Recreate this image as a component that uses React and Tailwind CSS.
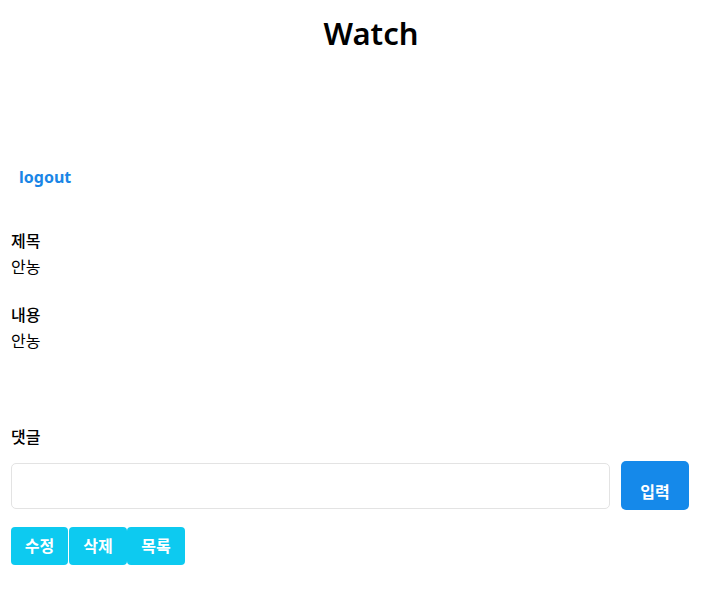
export default function App() {
    const font = { fontFamily: '"Noto Sans", "Noto Sans CJK KR", sans-serif' };
    return (
        <div className="w-[714px] h-[589px] bg-white text-black font-['Noto_Sans','Noto_Sans_CJK_KR',sans-serif]" style={font}>
            <h1 className="pt-[12px] pl-[28px] text-center text-[31px] leading-[42px] font-semibold">Watch</h1>

            <div className="mt-[111px] pl-[19px]">
                <a className="text-[16px] leading-[22px] font-bold text-[#1a86e6]">logout</a>
            </div>

            <div className="px-[11px] mt-[39px]">
                <div className="text-[16px] leading-[26px] font-medium">제목</div>
                <div className="text-[16px] leading-[26px]">안농</div>

                <div className="mt-[22px] text-[16px] leading-[26px] font-medium">내용</div>
                <div className="text-[16px] leading-[26px]">안농</div>

                <div className="mt-[70px] text-[16px] leading-[26px] font-medium">댓글</div>

                <div className="mt-[11px] flex items-center gap-[11px] pr-[14px]">
                    <input
                        type="text"
                        className="flex-1 h-[46px] border border-[#e3e3e3] rounded-[5px] px-3 outline-none"
                    />
                    <button className="w-[68px] h-[49px] pt-[12px] bg-[#1589ea] text-white text-[16px] font-semibold rounded-[5px]">
                        입력
                    </button>
                </div>

                <div className="mt-[17px] flex">
                    <button className="w-[57px] h-[38px] bg-[#0dcaf0] text-white text-[16px] font-semibold rounded-[4px]">수정</button>
                    <button className="ml-px w-[58px] h-[38px] bg-[#0dcaf0] text-white text-[16px] font-semibold rounded-[4px]">삭제</button>
                    <button className="w-[58px] h-[38px] bg-[#0dcaf0] text-white text-[16px] font-semibold rounded-[4px]">목록</button>
                </div>
            </div>
        </div>
    );
}
